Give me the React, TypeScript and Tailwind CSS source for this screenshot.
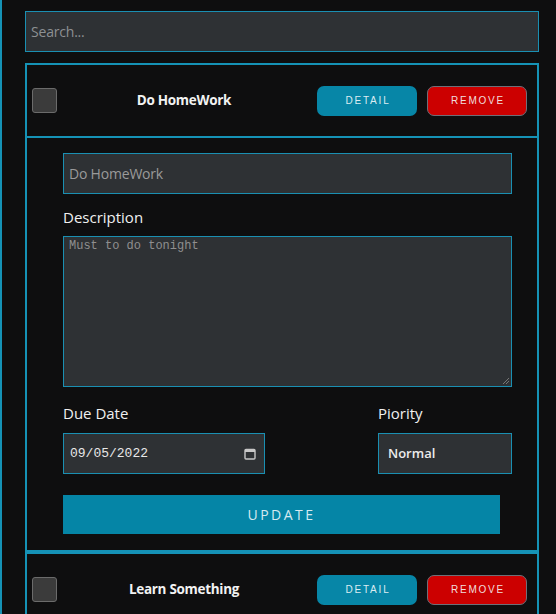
import React from "react";

const SANS = "font-['Open_Sans',sans-serif]";

function Header({ title }: { title: string }) {
  return (
    <div className="flex items-center h-[71px] pl-[5px] pr-[10px]">
      <div className="w-[25px] h-[25px] rounded-[3px] bg-[#3b3b3b] border border-[#6b6b6b] shrink-0" />
      <div className={`flex-1 text-center text-[13.5px] tracking-[-0.3px] font-bold text-[#f2f2f2] pr-[6px] ${SANS}`}>{title}</div>
      <div className="flex gap-[10px]">
        <button className="w-[100px] h-[30px] rounded-[7px] bg-[#0786a7] text-[#dcecf2] text-[10px] tracking-[1.8px] font-['Liberation_Sans',Arial,sans-serif] pl-[2px]">
          DETAIL
        </button>
        <button className="w-[100px] h-[30px] rounded-[7px] bg-[#cc0000] border border-[#6f6f78] text-[#f0dede] text-[10px] tracking-[1.8px] font-['Liberation_Sans',Arial,sans-serif] pl-[2px]">
          REMOVE
        </button>
      </div>
    </div>
  );
}

function CalendarIcon() {
  return (
    <svg width="12" height="12" viewBox="0 0 12 12" fill="none">
      <rect x="1" y="1.5" width="10" height="9.5" rx="1" stroke="#c8c8c8" strokeWidth="1.4" />
      <rect x="1" y="1.5" width="10" height="2.5" fill="#c8c8c8" />
    </svg>
  );
}

export default function App() {
  return (
    <div className={`min-h-screen bg-[#0e0e0f] flex ${SANS}`}>
      <div className="w-[2px] bg-[#1592b6] shrink-0" />
      <div className="flex-1 pl-[23px] pr-[17px] pt-[11px]">
        <div className="h-[41px] bg-[#2e3134] border border-[#1a8fb2] flex items-center px-[5px]">
          <span className={`text-[14px] text-[#8d9093] tracking-[-0.2px] ${SANS}`}>Search...</span>
        </div>

        <div className="mt-[11px] border-2 border-[#1592b6]">
          <Header title="Do HomeWork" />
          <div className="border-t-2 border-[#1592b6] pl-[36px] pt-[15px] pb-[16px]">
            <div className="w-[449px]">
              <div className="h-[41px] bg-[#2e3134] border border-[#1a8fb2] flex items-center px-[5px]">
                <span className="text-[14px] tracking-[-0.2px] text-[#9a9a9a]">Do HomeWork</span>
              </div>
              <div className="mt-[11px] mb-[7px] text-[15px] leading-[24px] text-[#f0f0f0]">Description</div>
              <div className="relative h-[151px] bg-[#2e3134] border border-[#1a8fb2] px-[5px] pt-[1px]">
                <div className="text-[12px] leading-[16px] font-['Liberation_Mono',monospace] text-[#8f8f8f]">Must to do tonight</div>
                <svg className="absolute right-[1px] bottom-[1px]" width="8" height="8" viewBox="0 0 8 8">
                  <path d="M7 1 L1 7 M7 4 L4 7" stroke="#777" strokeWidth="1" />
                </svg>
              </div>
              <div className="mt-[14px] flex justify-between">
                <div className="w-[202px]">
                  <div className="mb-[8px] text-[15px] leading-[24px] text-[#f0f0f0]">Due Date</div>
                  <div className="h-[41px] bg-[#2e3134] border border-[#1a8fb2] flex items-center justify-between pl-[6px] pr-[8px]">
                    <span className="text-[13px] font-['Liberation_Mono',monospace] text-[#e8e8e8]">09/05/2022</span>
                    <CalendarIcon />
                  </div>
                </div>
                <div className="w-[134px]">
                  <div className="mb-[8px] text-[15px] leading-[24px] text-[#f0f0f0]">Piority</div>
                  <div className="h-[41px] bg-[#2e3134] border border-[#1a8fb2] flex items-center pl-[9px]">
                    <span className="text-[13px] font-semibold text-[#ececec]">Normal</span>
                  </div>
                </div>
              </div>
              <button className="mt-[21px] w-[437px] h-[39px] bg-[#0585a6] text-[#d6eaf1] text-[14px] tracking-[2.5px]">
                UPDATE
              </button>
            </div>
          </div>
        </div>

        <div className="border-2 border-[#1592b6] border-b-0">
          <Header title="Learn Something" />
        </div>
      </div>
    </div>
  );
}
